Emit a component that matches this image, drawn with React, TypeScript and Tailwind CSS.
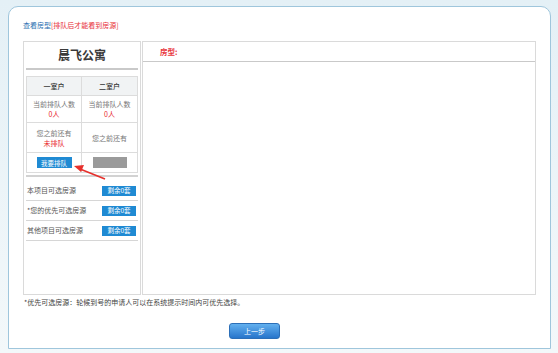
import React from 'react';

const font = { fontFamily: '"Noto Sans CJK SC", "Noto Sans", sans-serif' };

function SideRow({ label }: { label: string }) {
  return (
    <div className="flex h-[20px] items-center justify-between border-b border-[#d6d6d6] pl-[1px] pr-[2px]">
      <span className="text-[7px] text-[#555]">{label}</span>
      <span className="flex h-[10px] w-[34px] items-center justify-center bg-[#1f8ad3] text-[6.5px] text-white">
        剩余0套
      </span>
    </div>
  );
}

export default function App() {
  return (
    <div
      className="h-[353px] w-[558px] overflow-hidden bg-gradient-to-b from-[#e4f0f6] to-[#f3f8fa] pl-[8px] pt-[6px]"
      style={font}
    >
      <div className="flex h-[343px] w-[543px] flex-col rounded-t-[10px] border border-[#9fc6dc] bg-white px-[14px]">
        <div className="mt-[13px] h-[10px] text-[7px] leading-[10px]">
          <span className="text-[#2a6eb0]">查看房型</span>
          <span className="text-[#e8333a]">[排队后才能看到房源]</span>
        </div>

        <div className="mt-[11px] flex h-[254px] gap-[1px]">
          {/* left column */}
          <div className="relative w-[118px] border border-[#dadada] px-[2px]">
            <div className="flex h-[28px] items-center justify-center border-b-2 border-[#c9c9c9] text-[12px] font-bold text-[#3a3a3a]">
              晨飞公寓
            </div>
            <div className="mt-[6px] grid grid-cols-2 border border-[#dcdcdc] text-center text-[7px] leading-[10px]">
              <div className="flex h-[19px] items-center justify-center border-b border-r border-[#dcdcdc] bg-[#f1f3f4] font-medium text-[#333]">
                一室户
              </div>
              <div className="flex h-[19px] items-center justify-center border-b border-[#dcdcdc] bg-[#f1f3f4] font-medium text-[#333]">
                二室户
              </div>
              <div className="flex h-[27px] flex-col items-center justify-center border-b border-r border-[#dcdcdc]">
                <span className="text-[#777]">当前排队人数</span>
                <span className="text-[#e8282e]">0人</span>
              </div>
              <div className="flex h-[27px] flex-col items-center justify-center border-b border-[#dcdcdc]">
                <span className="text-[#777]">当前排队人数</span>
                <span className="text-[#e8282e]">0人</span>
              </div>
              <div className="flex h-[30px] flex-col items-center justify-center border-b border-r border-[#dcdcdc]">
                <span className="text-[#777]">您之前还有</span>
                <span className="text-[#e8282e]">未排队</span>
              </div>
              <div className="flex h-[30px] items-center justify-center border-b border-[#dcdcdc] text-[#777]">
                您之前还有
              </div>
              <div className="flex h-[19px] items-center justify-center border-r border-[#dcdcdc]">
                <span className="flex h-[11px] w-[35px] items-center justify-center bg-[#1f8ad3] text-[6.5px] text-white">
                  我要排队
                </span>
              </div>
              <div className="flex h-[19px] items-center justify-center">
                <span className="h-[11px] w-[34px] bg-[#9a9a9a]" />
              </div>
            </div>
            <div className="mt-[2px] border-b-2 border-[#d2d2d2]" />
            <div className="mt-[4px]">
              <SideRow label="本项目可选房源" />
              <SideRow label="*您的优先可选房源" />
              <SideRow label="其他项目可选房源" />
            </div>

            {/* red pointer arrow */}
            <svg
              className="absolute left-[46px] top-[118px]"
              width="40"
              height="22"
              viewBox="0 0 40 22"
            >
              <line x1="35" y1="19" x2="10" y2="9" stroke="#e6302c" strokeWidth="1.8" />
              <polygon points="4,6 14,5 11,12" fill="#e6302c" />
            </svg>
          </div>

          {/* right column */}
          <div className="flex-1 border border-[#dadada]">
            <div className="flex h-[20px] items-center border-b border-[#c9c9c9] pl-[17px] text-[7.5px] font-bold text-[#e8333a]">
              房型:
            </div>
          </div>
        </div>

        <div className="ml-[1px] mt-[2px] h-[10px] text-[7px] leading-[10px] text-[#444]">
          *优先可选房源：轮候到号的申请人可以在系统提示时间内可优先选择。
        </div>

        <div className="ml-[206px] mt-[16px] flex h-[16px] w-[51px] items-center justify-center rounded-[3px] border border-[#2c6fb8] bg-gradient-to-b from-[#62b0ef] to-[#2775cb] text-[7px] text-white">
          上一步
        </div>
      </div>
    </div>
  );
}
